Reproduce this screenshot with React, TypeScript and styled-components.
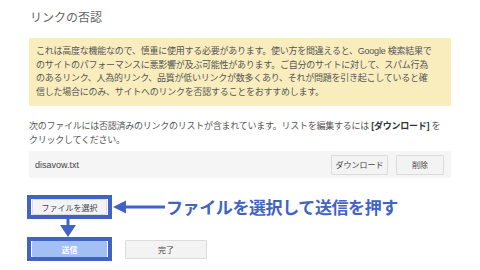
import React from 'react';
import styled, { createGlobalStyle } from 'styled-components';

const GlobalStyle = createGlobalStyle`
  html, body {
    margin: 0;
    padding: 0;
    background: #fff;
  }
  body {
    font-family: 'Liberation Sans', 'Noto Sans CJK JP', sans-serif;
    width: 480px;
    height: 270px;
    overflow: hidden;
  }
`;

const ANNOT = '#4263c3';

const Page = styled.div`
  display: flex;
  flex-direction: column;
  padding: 11px 0 0 29px;
  width: 422px;
`;

const Title = styled.h1`
  margin: 0 0 0 1px;
  font-size: 12px;
  line-height: 14px;
  font-weight: normal;
  color: #666;
`;

const Warning = styled.div`
  margin-top: 13px;
  background: #f9edbe;
  padding: 7px 7px;
  font-size: 9px;
  line-height: 13.5px;
  color: #555;
  letter-spacing: -0.25px;
  white-space: nowrap;
`;

const Info = styled.p`
  margin: 14px 0 0;
  font-size: 9px;
  line-height: 13.5px;
  color: #555;
  letter-spacing: -0.25px;
  white-space: nowrap;
`;

const Strong = styled.span`
  font-weight: bold;
  color: #333;
`;

const FileRow = styled.div`
  margin-top: 4px;
  height: 27px;
  background: #f5f5f5;
  display: flex;
  align-items: center;
  padding: 0 7px 0 6px;
  gap: 8px;
`;

const FileName = styled.span`
  flex: 1;
  font-size: 9px;
  color: #444;
`;

const Button = styled.button<{ $w: number; $h?: number; $primary?: boolean }>`
  width: ${p => p.$w}px;
  height: ${p => p.$h ?? 20}px;
  padding: 0;
  font-family: inherit;
  font-size: 8px;
  color: ${p => (p.$primary ? '#fff' : '#444')};
  font-weight: ${p => (p.$primary ? 'bold' : 'normal')};
  background: ${p => (p.$primary ? '#a3c0f5' : '#f3f3f3')};
  border: 1px solid ${p => (p.$primary ? '#a3c0f5' : '#dcdcdc')};
  border-radius: 1px;
  cursor: pointer;
`;

const Actions = styled.div`
  margin: 17px 0 0 -2px;
  display: flex;
  flex-direction: column;
`;

const ActionRow = styled.div`
  display: flex;
  align-items: center;
`;

const Highlight = styled.div`
  border: 4px solid ${ANNOT};
  padding: 0 1px 0 1px;
  display: flex;
  background: #fff;
`;

const Note = styled.span`
  margin-left: 1px;
  font-family: 'Noto Sans CJK JP', sans-serif;
  font-size: 17px;
  font-weight: bold;
  color: ${ANNOT};
  letter-spacing: -0.4px;
  line-height: 20px;
`;

const DownArrow = styled.svg`
  display: block;
  margin-left: 33px;
`;

const Spacer = styled.div`
  width: 13px;
`;

export default function App() {
  return (
    <>
      <GlobalStyle />
      <Page>
        <Title>リンクの否認</Title>
        <Warning>
          これは高度な機能なので、慎重に使用する必要があります。使い方を間違えると、Google 検索結果で
          <br />
          のサイトのパフォーマンスに悪影響が及ぶ可能性があります。ご自分のサイトに対して、スパム行為
          <br />
          のあるリンク、人為的リンク、品質が低いリンクが数多くあり、それが問題を引き起こしていると確
          <br />
          信した場合にのみ、サイトへのリンクを否認することをおすすめします。
        </Warning>
        <Info>
          次のファイルには否認済みのリンクのリストが含まれています。リストを編集するには <Strong>[ダウンロード]</Strong> を
          <br />
          クリックしてください。
        </Info>
        <FileRow>
          <FileName>disavow.txt</FileName>
          <Button $w={57}>ダウンロード</Button>
          <Button $w={48}>削除</Button>
        </FileRow>
        <Actions>
          <ActionRow>
            <Highlight>
              <Button $w={75} $h={16}>ファイルを選択</Button>
            </Highlight>
            <svg width="53" height="16" viewBox="0 0 53 16">
              <path d="M1 8 L14 1.5 L14 14.5 Z" fill={ANNOT} />
              <rect x="12" y="6.5" width="41" height="3" fill={ANNOT} />
            </svg>
            <Note>ファイルを選択して送信を押す</Note>
          </ActionRow>
          <DownArrow width="16" height="18" viewBox="0 0 16 18">
            <rect x="6.5" y="0" width="3" height="8" fill={ANNOT} />
            <path d="M0 6 L16 6 L8 18 Z" fill={ANNOT} />
          </DownArrow>
          <ActionRow>
            <Highlight>
              <Button $w={75} $h={16} $primary>送信</Button>
            </Highlight>
            <Spacer />
            <Button $w={82} $h={19}>完了</Button>
          </ActionRow>
        </Actions>
      </Page>
    </>
  );
}
